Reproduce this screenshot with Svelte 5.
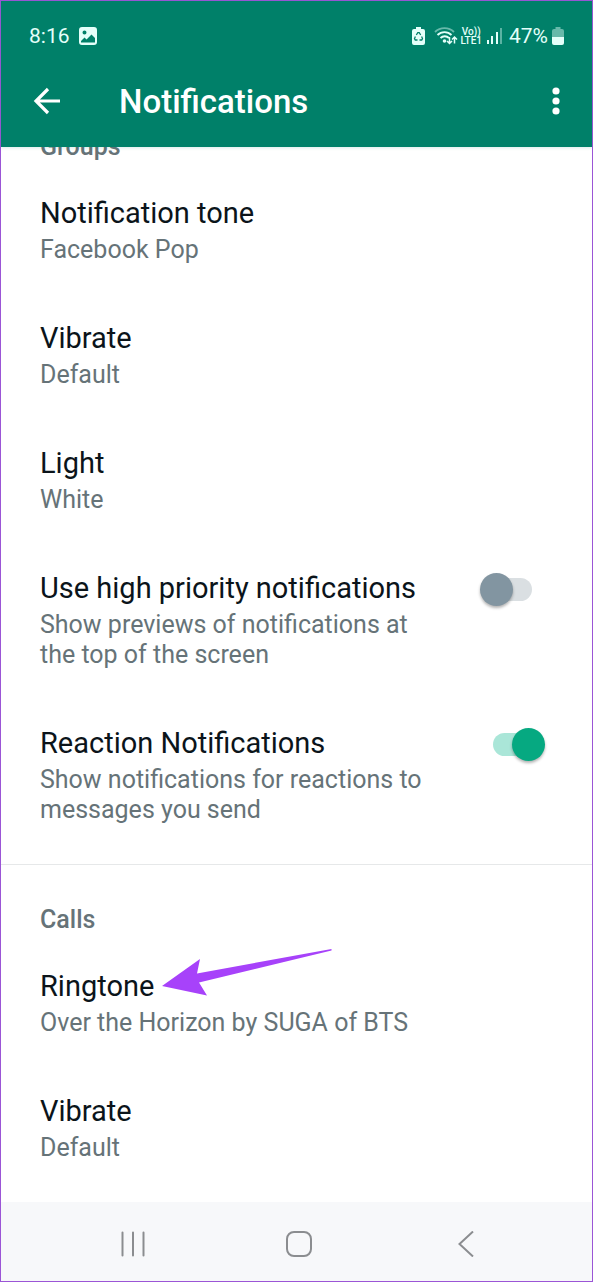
<script lang="ts">
  type Row = {
    title: string;
    detail: string;
    pointer?: boolean;
    toggle?: boolean;
    on?: boolean;
  };

  type Section = { name: string; rows: Row[] };

  const sections: Section[] = $state([
    {
      name: "Groups",
      rows: [
        { title: "Notification tone", detail: "Facebook Pop" },
        { title: "Vibrate", detail: "Default" },
        { title: "Light", detail: "White" },
        {
          title: "Use high priority notifications",
          detail: "Show previews of notifications at the top of the screen",
          toggle: true,
          on: false,
        },
        {
          title: "Reaction Notifications",
          detail: "Show notifications for reactions to messages you send",
          toggle: true,
          on: true,
        },
      ],
    },
    {
      name: "Calls",
      rows: [
        {
          title: "Ringtone",
          detail: "Over the Horizon by SUGA of BTS",
          pointer: true,
        },
        { title: "Vibrate", detail: "Default" },
      ],
    },
  ]);
</script>

<div class="screen">
  <header>
    <div class="status">
      <span class="time">8:16</span>
      <svg width="18" height="18" viewBox="0 0 18 18">
        <path
          fill="currentColor"
          fill-rule="evenodd"
          d="M3 0h12a3 3 0 0 1 3 3v12a3 3 0 0 1-3 3H3a3 3 0 0 1-3-3V3a3 3 0 0 1 3-3zM5.500 3.500a2 2 0 1 0 0 4a2 2 0 1 0 0-4zM2 15.500h14v-4.500l-3.500-3.500-5 5-2-2-3.500 3.500z"
        />
      </svg>

      <div class="indicators">
        <svg width="13" height="18" viewBox="0 0 13 18">
          <path
            fill="currentColor"
            d="M4 0h5v2h2a2 2 0 0 1 2 2v12a2 2 0 0 1-2 2H2a2 2 0 0 1-2-2V4a2 2 0 0 1 2-2h2z"
          />
          <path
            fill="none"
            stroke="#008069"
            stroke-width="1.300"
            d="M4.300 8l1.500-2.300h1.400L8.700 8M9.600 9.600l.9 2-.8 1.400H7.500M5.500 13H3.300l-.8-1.400.9-2"
          />
        </svg>
        <svg class="wifi" width="24" height="18" viewBox="0 0 24 18">
          <g fill="none" stroke="currentColor" stroke-width="1.800">
            <path opacity=".45" d="M1 5a13.500 13.500 0 0 1 19 0" />
            <path d="M3.500 8a10 10 0 0 1 14 0" />
            <path d="M6.500 11a6 6 0 0 1 8.500 0" />
          </g>
          <circle cx="10.500" cy="14" r="1.800" fill="currentColor" />
          <path
            fill="none"
            stroke="currentColor"
            stroke-width="1.500"
            d="M15.500 10v6.500M13 14l2.500 2.500L18 14M20.500 16.500V10M18 12.500l2.500-2.500 2.500 2.500"
          />
        </svg>
        <span class="volte"><span>Vo))</span><span>LTE1</span></span>
        <svg class="signal" width="16" height="16" viewBox="0 0 16 16">
          <g fill="currentColor">
            <rect x="0" y="12" width="2" height="4" />
            <rect x="4" y="8" width="2" height="8" />
            <rect x="9" y="4" width="2" height="12" />
            <rect x="13" y="0" width="2" height="16" opacity=".4" />
          </g>
        </svg>
        <span class="percent">47%</span>
        <svg width="12" height="18" viewBox="0 0 12 18">
          <path
            fill="currentColor"
            opacity=".45"
            d="M3.500 0h5v2H10a2 2 0 0 1 2 2v6H0V4a2 2 0 0 1 2-2h1.500z"
          />
          <path fill="currentColor" d="M0 10h12v6a2 2 0 0 1-2 2H2a2 2 0 0 1-2-2z" />
        </svg>
      </div>
    </div>

    <div class="app-bar">
      <button class="icon" aria-label="Back">
        <svg width="28" height="28" viewBox="0 0 28 28">
          <path
            fill="none"
            stroke="currentColor"
            stroke-width="3.200"
            d="M27 14H3M15 2L3 14l12 12"
          />
        </svg>
      </button>
      <h1>Notifications</h1>
      <button class="icon" aria-label="More options">
        <svg width="8" height="28" viewBox="0 0 8 28">
          <g fill="currentColor">
            <circle cx="4" cy="4" r="3.600" />
            <circle cx="4" cy="14" r="3.600" />
            <circle cx="4" cy="24" r="3.600" />
          </g>
        </svg>
      </button>
    </div>
  </header>

  <main>
    {#each sections as section}
      <section>
        <h2>{section.name}</h2>
        {#each section.rows as row}
          {#if row.toggle}
            <label class="row">
              <span class="text">
                <span class="title">{row.title}</span>
                <span class="detail">{row.detail}</span>
              </span>
              <input type="checkbox" role="switch" bind:checked={row.on} />
            </label>
          {:else}
            <button class="row">
              <span class="text">
                <span class="title">
                  {row.title}
                  {#if row.pointer}
                    <svg class="pointer" width="170" height="47" viewBox="0 0 170 47">
                      <path
                        fill="#a742fa"
                        d="M0 37L38 10L35 24.500L169.500 0V1.500L37 33.500L45 46.500z"
                      />
                    </svg>
                  {/if}
                </span>
                <span class="detail">{row.detail}</span>
              </span>
            </button>
          {/if}
        {/each}
      </section>
    {/each}
  </main>

  <nav>
    <button aria-label="Recent apps">
      <svg width="26" height="26" viewBox="0 0 26 26">
        <path
          fill="none"
          stroke="currentColor"
          stroke-width="2"
          stroke-linecap="round"
          d="M2.500 1.500v23M13 1.500v23M23.500 1.500v23"
        />
      </svg>
    </button>
    <button aria-label="Home">
      <svg width="26" height="26" viewBox="0 0 26 26">
        <rect
          x="1"
          y="1"
          width="24"
          height="24"
          rx="7"
          fill="none"
          stroke="currentColor"
          stroke-width="2"
        />
      </svg>
    </button>
    <button aria-label="Back">
      <svg width="26" height="26" viewBox="0 0 26 26">
        <path
          fill="none"
          stroke="currentColor"
          stroke-width="2"
          d="M20 .5L6.500 13L20 25.500"
        />
      </svg>
    </button>
  </nav>
</div>

<style>
  :global(body) {
    margin: 0;
  }

  .screen {
    box-sizing: border-box;
    min-height: 100vh;
    display: flex;
    flex-direction: column;
    border: 1px solid #9b55d6;
    background: #fff;
    color: #0b141a;
    font-family: Roboto, sans-serif;
  }

  svg {
    display: block;
    flex: none;
  }

  button {
    border: none;
    padding: 0;
    background: none;
    color: inherit;
    font: inherit;
    text-align: left;
    cursor: pointer;
  }

  header {
    position: relative;
    padding: 21px 28px 16px;
    background: #008069;
    color: #e4fffa;
    box-shadow: 0 1px 3px #00806926;
  }

  .status {
    display: flex;
    align-items: center;
    gap: 9px;
    height: 28px;
    font-size: 21px;
  }

  .indicators {
    display: flex;
    align-items: center;
    margin-left: auto;
  }

  .wifi {
    margin-left: 9px;
  }

  .volte {
    display: flex;
    flex-direction: column;
    align-items: center;
    margin-left: 2px;
    font-size: 10px;
    font-weight: 500;
    line-height: 9px;
  }

  .signal {
    margin: 0 6px 0 5px;
  }

  .percent {
    margin-right: 4px;
  }

  .app-bar {
    display: flex;
    align-items: center;
    height: 60px;
    margin-top: 21px;
    color: #fff;
  }

  .icon {
    padding: 0 4px;
  }

  h1 {
    flex: 1;
    margin: 0 0 0 54px;
    font-size: 33px;
    font-weight: 500;
  }

  main {
    flex: 1;
    overflow: hidden;
  }

  section {
    padding: 40px 0 13px;
  }

  /* the list is scrolled so that the first heading slides under the app bar */
  section:first-child {
    margin-top: -55px;
  }

  section + section {
    border-top: 1px solid #e6e8e9;
  }

  h2 {
    margin: 0 0 4px;
    padding: 0 39px;
    font-size: 25px;
    font-weight: 500;
    line-height: 30px;
    color: #667378;
  }

  .row {
    box-sizing: border-box;
    display: flex;
    align-items: flex-start;
    gap: 40px;
    width: 100%;
    padding: 26px 47px 26px 39px;
    cursor: pointer;
  }

  .text {
    flex: 1;
    display: flex;
    flex-direction: column;
    align-items: flex-start;
  }

  .title {
    position: relative;
    font-size: 29px;
    line-height: 43px;
  }

  .detail {
    font-size: 25px;
    line-height: 30px;
    color: #667378;
  }

  .pointer {
    position: absolute;
    top: -16px;
    left: 100%;
    margin-left: 8px;
  }

  input {
    appearance: none;
    position: relative;
    flex: none;
    width: 65px;
    height: 33px;
    margin: 6px 0 0;
    cursor: pointer;
  }

  input::before {
    content: "";
    position: absolute;
    inset: 5px 13px;
    border-radius: 12px;
    background: #dadfe2;
  }

  input::after {
    content: "";
    position: absolute;
    top: 0;
    left: 0;
    width: 33px;
    height: 33px;
    border-radius: 50%;
    background: #8295a1;
    box-shadow: 0 2px 3px #0000004d;
  }

  input:checked::before {
    background: #aae6d8;
  }

  input:checked::after {
    left: 32px;
    background: #06a981;
  }

  nav {
    display: grid;
    grid-template-columns: repeat(3, 1fr);
    box-sizing: border-box;
    height: 79px;
    padding: 4px 43px 0 49px;
    background: #f7f8fa;
    color: #8b8d90;
  }

  nav button {
    display: flex;
    align-items: center;
    justify-content: center;
  }
</style>
